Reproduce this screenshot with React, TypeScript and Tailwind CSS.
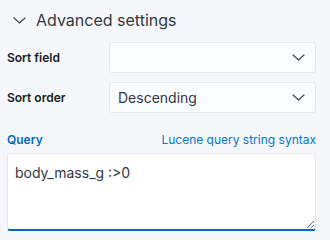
function Chevron({ className = '' }: { className?: string }) {
  return (
    <svg viewBox="0 0 13 7" className={className} fill="none" stroke="currentColor" strokeWidth={1.2}>
      <polyline points="0.6,0.6 6.5,6 12.4,0.6" />
    </svg>
  );
}

function SelectRow({ label, value }: { label: string; value: string }) {
  return (
    <div className="flex items-center">
      <label className="w-[102px] shrink-0 text-[12px] font-semibold text-[#1a1c21]">{label}</label>
      <div className="flex h-[31px] flex-1 items-center justify-between rounded-[3px] border border-[#e3e7ee] bg-[#fbfcfd] pl-[8px] pr-[10px]">
        <span className="text-[14px] text-[#343741]">{value}</span>
        <Chevron className="h-[7px] w-[13px] text-[#343741]" />
      </div>
    </div>
  );
}

export default function App() {
  return (
    <div
      className="h-[240px] w-[330px] overflow-hidden bg-[#f5f7fa] pl-[7px] pr-[14px]"
      style={{ fontFamily: 'Inter, "Noto Sans", sans-serif' }}
    >
      {/* header */}
      <div className="flex h-[42px] items-center gap-[10px] pb-[2px] pl-[6px]">
        <Chevron className="h-[7px] w-[13px] text-[#343741]" />
        <span className="text-[16px] text-[#343741]">Advanced settings</span>
      </div>

      <div className="flex flex-col gap-[9px]">
        <SelectRow label="Sort field" value="" />
        <SelectRow label="Sort order" value="Descending" />
      </div>

      <div className="mt-[18px] flex items-center justify-between">
        <span className="text-[12px] font-semibold text-[#006bb8]">Query</span>
        <a className="text-[12px] text-[#0077cc]">Lucene query string syntax</a>
      </div>

      <textarea
        className="mt-[4px] block h-[78px] w-full resize-y rounded-[3px] border border-[#e3e7ee] border-b-2 border-b-[#006bb8] bg-white px-[7px] py-[8px] text-[14px] text-[#343741] outline-none"
        defaultValue="body_mass_g :>0"
      />
    </div>
  );
}
